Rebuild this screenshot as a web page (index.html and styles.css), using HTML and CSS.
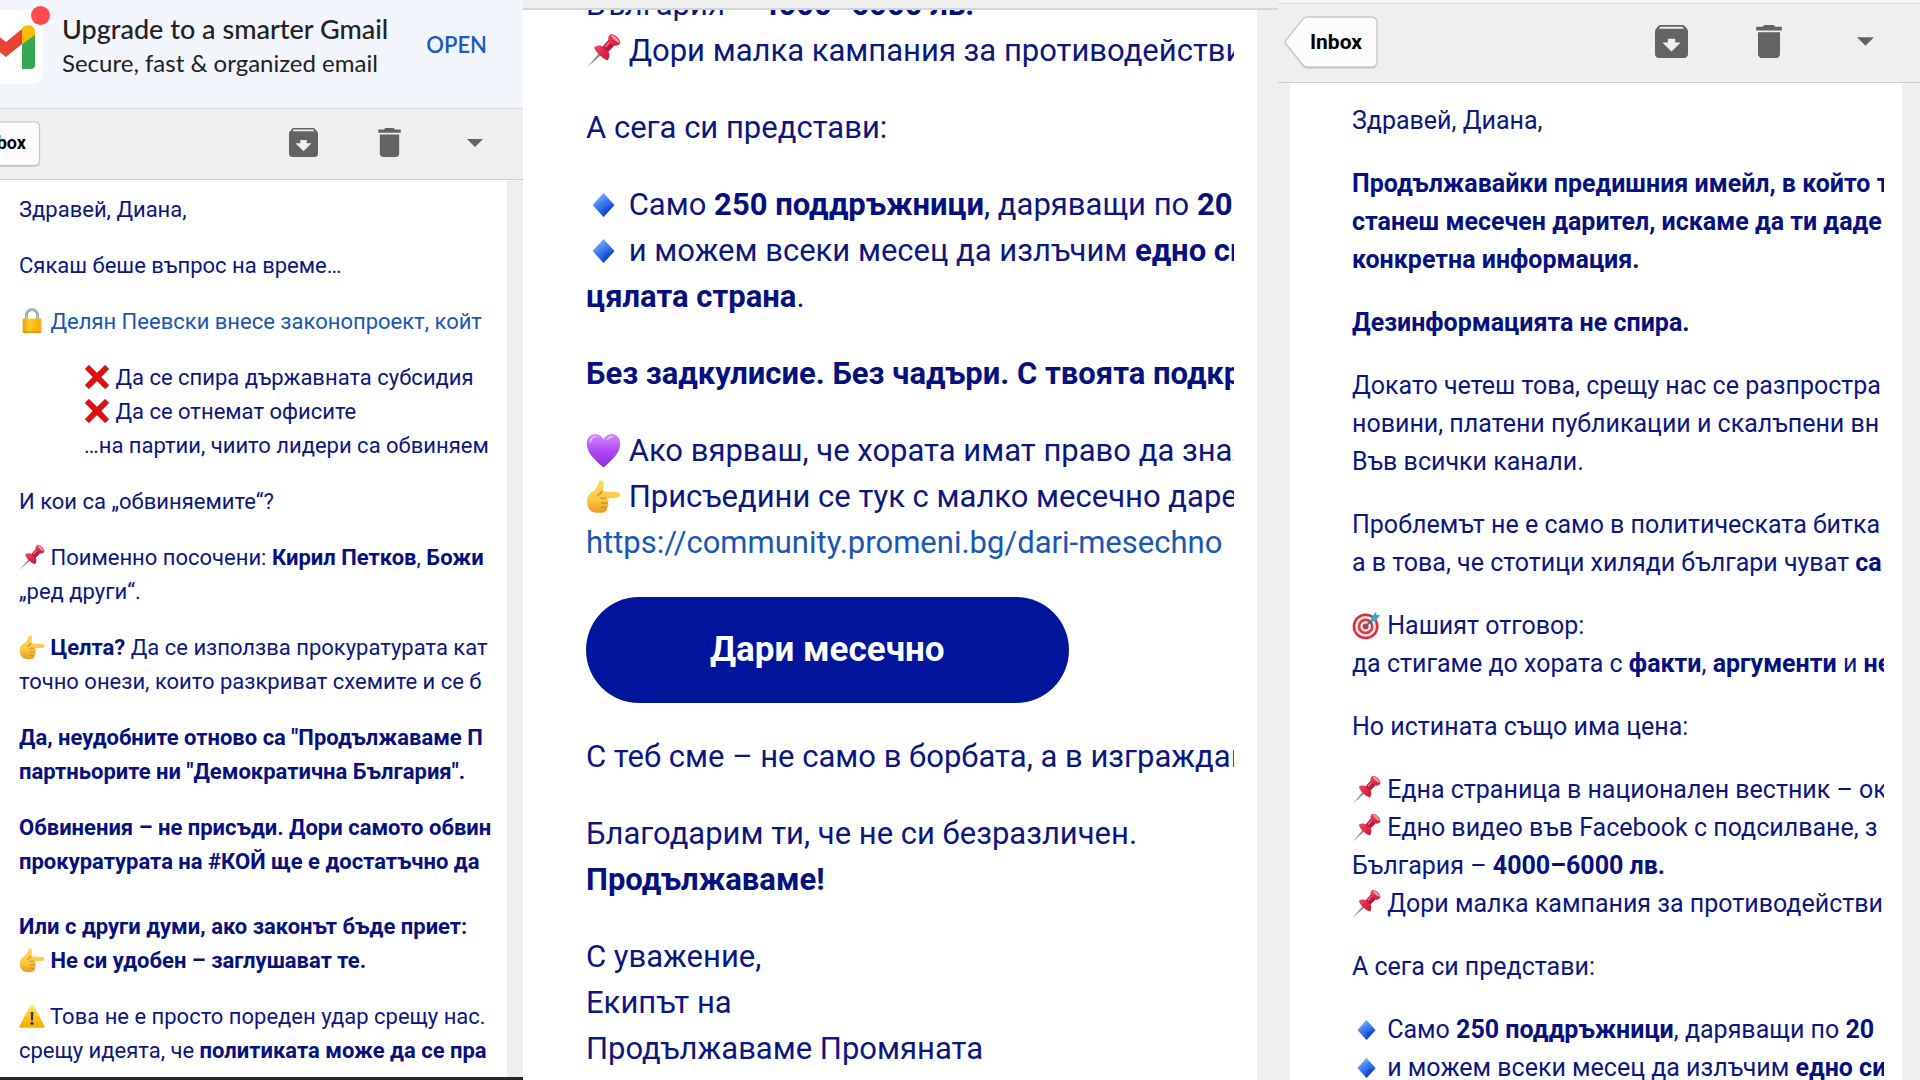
FILE: index.html
```html
<!doctype html>
<html lang="bg">
<head>
    <meta charset="UTF-8">
    <meta name="viewport" content="width=device-width, initial-scale=1.0">
    <title>Inbox</title>
    <link rel="stylesheet" href="styles.css">
</head>
<body>
<svg class="defs" aria-hidden="true">
    <defs>
        <linearGradient id="g-lock" x1="0" y1="0" x2="1" y2="0"><stop offset="0" stop-color="#f09a12"/><stop offset=".35" stop-color="#ffcf1f"/><stop offset="1" stop-color="#f5a811"/></linearGradient>
        <linearGradient id="g-pin" x1="0" y1="0" x2="1" y2="1"><stop offset="0" stop-color="#ff6f86"/><stop offset=".5" stop-color="#e0284a"/><stop offset="1" stop-color="#a80f34"/></linearGradient>
        <linearGradient id="g-hand" x1="0" y1="0" x2="0" y2="1"><stop offset="0" stop-color="#ffd95c"/><stop offset=".6" stop-color="#fbc740"/><stop offset="1" stop-color="#e99a25"/></linearGradient>
        <linearGradient id="g-warn" x1="0" y1="0" x2="0" y2="1"><stop offset="0" stop-color="#fff0a0"/><stop offset=".4" stop-color="#ffcf2a"/><stop offset="1" stop-color="#f5ac00"/></linearGradient>
        <linearGradient id="g-diamond" x1="0" y1="0" x2=".6" y2="1"><stop offset="0" stop-color="#a3cbfb"/><stop offset=".5" stop-color="#3f7ff0"/><stop offset="1" stop-color="#0a3fd0"/></linearGradient>
        <linearGradient id="g-heart" x1="0" y1="0" x2="0" y2="1"><stop offset="0" stop-color="#d68bfb"/><stop offset=".5" stop-color="#b04af4"/><stop offset="1" stop-color="#8a2be2"/></linearGradient>
        <symbol id="lock" viewBox="0 0 32 32">
            <path d="M9 15V9.500a7 7.500 0 0 1 14 0V15" fill="none" stroke="#8f9499" stroke-width="3.400"/>
            <path d="M9 15V9.500a7 7.500 0 0 1 14 0V15" fill="none" stroke="#c9cdd1" stroke-width="1.200"/>
            <rect x="4.500" y="13" width="23" height="18" rx="1.800" fill="url(#g-lock)"/>
            <path d="M5 29.500h22" stroke="#d98508" stroke-width="1.500"/>
        </symbol>
        <symbol id="cross" viewBox="0 0 32 32">
            <path d="M6 1.500l10 9.800L26 1.500 30.500 6 20.800 16l9.700 10-4.500 4.500-10-9.800-10 9.800L1.500 26l9.700-10L1.500 6z" fill="#dd1013" stroke="#b80a0d" stroke-width=".8"/>
        </symbol>
        <symbol id="pin" viewBox="0 0 32 32">
            <path d="M.8 31.600 13 17.200l2 2z" fill="#8c8f96"/>
            <path d="M7.500 13.200c2.500-2.200 6-2 8-.8l5-6c-.8-2 .5-4.800 2.500-5.600 4 .5 7.800 4 8.400 8.200-1 2.300-3.600 3.200-5.700 2.500l-5.200 5.300c1.500 2.200 1.200 5.700-.8 8.100C14.500 23 9.500 18.500 7.500 13.200z" fill="url(#g-pin)"/>
            <path d="M20.500 6.400c1 2.200 2.800 4.200 5.200 5.100l-5.200 5.300c-2-.6-4-2.300-5-4.400z" fill="#b9173b"/>
            <path d="M23 1.500c3.500.8 6.800 4 7.700 7.300-3-.2-7.300-3.800-7.700-7.300z" fill="#ff93a3"/>
            <path d="M17 12l4-4.500 1.200 1.400-4 4.500z" fill="#f5647c"/>
        </symbol>
        <symbol id="hand" viewBox="0 0 32 32">
            <path d="M1 20c0-4 2-6.500 5.500-8.500C9 10 10.500 6.500 11.600 3c.5-1.800 3-2.200 4-.5 1.200 2.200.8 5.800-.8 8.800L29 12.200c3 .2 3 4.600 0 4.800l-10.500.5c2.800.6 2.800 3.600 1 4.400 1.500 1.200 1.300 3.400-.6 4.200 1 1.600.2 3.400-1.700 4-3.200 1.100-9.200 1.300-12.200-.6C2 27.600 1 24 1 20z" fill="url(#g-hand)"/>
            <path d="M14.800 11.300c-1 2-2.600 3-4.300 3.700M18.500 17.500h-5M19.500 21.900h-5.300M18.900 26.100h-4.700" fill="none" stroke="#d88b22" stroke-width="1.300" stroke-linecap="round"/>
        </symbol>
        <symbol id="warn" viewBox="0 0 32 32">
            <path d="M14.300 2.200c.7-1.400 2.700-1.400 3.400 0L31.300 28c.7 1.300 0 2.400-1.500 2.400H2.200C.7 30.400 0 29.300.7 28z" fill="url(#g-warn)"/>
            <path d="M14.300 11h3.400l-.6 10.500h-2.200z" fill="#333"/>
            <circle cx="16" cy="25" r="1.900" fill="#333"/>
        </symbol>
        <symbol id="diamond" viewBox="0 0 32 32">
            <path d="M16 5.500 26 16.500 16 27.500 6 16.500z" fill="url(#g-diamond)"/>
            <path d="M16 27.500 26 16.500 16 19z" fill="#1243cf" opacity=".6"/>
        </symbol>
        <symbol id="heart" viewBox="0 0 32 32">
            <path d="M16 31.500C9 25.500.7 18.500.7 9.800.7 4.500 4 1 8.500 1c3.300 0 6 1.900 7.500 5 1.500-3.100 4.200-5 7.500-5 4.500 0 7.800 3.500 7.800 8.800 0 8.700-8.300 15.700-15.300 21.700z" fill="url(#g-heart)"/>
            <path d="M4 8c.3-2.500 2-4.200 4.500-4.400M19.500 6c1-1.500 2.500-2.400 4.200-2.400" fill="none" stroke="#e9b9ff" stroke-width="1.600" stroke-linecap="round"/>
        </symbol>
        <symbol id="target" viewBox="0 0 32 32">
            <circle cx="15" cy="17" r="14.300" fill="#d92f3c"/>
            <circle cx="15" cy="17" r="11.500" fill="#fbe9ea"/>
            <circle cx="15" cy="17" r="8.700" fill="#dd3a46"/>
            <circle cx="15" cy="17" r="5.800" fill="#fbe9ea"/>
            <circle cx="15" cy="17" r="3.200" fill="#d92f3c"/>
            <path d="M14.500 17.500 25 7" stroke="#3c6f85" stroke-width="2"/>
            <path d="M21.500 7.300 26.500.8l.6 3.600 4.200.4-5.600 6.200-4 .5z" fill="#35a7cf"/>
        </symbol>
        <symbol id="archive" viewBox="3 3 18 18">
            <path d="M20.540 5.230l-1.390-1.680C18.880 3.210 18.470 3 18 3H6c-.47 0-.88.210-1.160.550L3.460 5.230C3.170 5.570 3 6.020 3 6.500V19c0 1.100.9 2 2 2h14c1.100 0 2-.9 2-2V6.500c0-.48-.17-.93-.46-1.270zM12 17.500L7 12.500H10v-2h4v2h3L12 17.500zM5.120 5l.81-1h12l.94 1H5.120z" fill="#636363"/>
        </symbol>
        <symbol id="trash" viewBox="5 3 14 18">
            <path d="M6 19c0 1.100.9 2 2 2h8c1.100 0 2-.9 2-2V7H6v12zM19 4h-3.500l-1-1h-5l-1 1H5v2h14V4z" fill="#636363"/>
        </symbol>
        <symbol id="caret" viewBox="0 0 16 8">
            <path d="M0 0h16L8 8z" fill="#636363"/>
        </symbol>
        <symbol id="tag" viewBox="0 0 94 54">
            <path d="M23 2.500h64q6 0 6 6v38q0 6-6 6H23q-2.500 0-4-2L2 29q-1.500-2 0-4L19 4.500q1.500-2 4-2z" fill="#bdbdbd"/>
            <path d="M23 1h64q6 0 6 6v38q0 6-6 6H23q-2.500 0-4-2L2 28q-1.500-2 0-4L19 3q1.500-2 4-2z" fill="#fcfcfc" stroke="#c9c9c9" stroke-width="1.500"/>
        </symbol>
    </defs>
</svg>

<div class="screens">
    <section class="screen first">
        <header class="promo">
            <div class="app-icon">
                <svg class="gmail" viewBox="0 0 58 45" aria-hidden="true">
                    <path d="M0 10v31q0 4 4 4h9V20z" fill="#4285f4"/>
                    <path d="M45 20v25h9q4 0 4-4V10z" fill="#34a853"/>
                    <path d="M13 5v15l16 13 16-13V5L29 18z" fill="#ea4335"/>
                    <path d="M0 8v3l13 9V4C8-1 0 1 0 8z" fill="#c5221f"/>
                    <path d="M58 8v3L45 20V4c5-5 13-3 13 4z" fill="#fbbc04"/>
                </svg>
                <span class="badge"></span>
            </div>
            <div class="promo-text">
                <h1>Upgrade to a smarter Gmail</h1>
                <p>Secure, fast &amp; organized email</p>
            </div>
            <a class="open" href="#">OPEN</a>
        </header>
        <nav class="toolbar">
            <button class="back" type="button"><svg><use href="#tag"/></svg><span>Inbox</span></button>
            <button class="tool" type="button" aria-label="Archive"><svg class="i-archive"><use href="#archive"/></svg></button>
            <button class="tool" type="button" aria-label="Delete"><svg class="i-trash"><use href="#trash"/></svg></button>
            <button class="tool" type="button" aria-label="More"><svg class="i-caret"><use href="#caret"/></svg></button>
        </nav>
        <div class="sheet">
            <article class="mail">
                <p>Здравей, Диана,</p>
                <p>Сякаш беше въпрос на време…</p>
                <p><svg class="emoji"><use href="#lock"/></svg> <a href="#">Делян Пеевски внесе законопроект, койт</a></p>
                <p class="indent"><svg class="emoji"><use href="#cross"/></svg> Да се спира държавната субсидия<br>
                    <svg class="emoji"><use href="#cross"/></svg> Да се отнемат офисите<br>
                    …на партии, чиито лидери са обвиняем</p>
                <p>И кои са „обвиняемите“?</p>
                <p><svg class="emoji"><use href="#pin"/></svg> Поименно посочени: <b>Кирил Петков</b>, <b>Божи</b><br>
                    „ред други“.</p>
                <p><svg class="emoji"><use href="#hand"/></svg> <b>Целта?</b> Да се използва прокуратурата кат<br>
                    точно онези, които разкриват схемите и се б</p>
                <p><b>Да, неудобните отново са "Продължаваме П<br>
                    партньорите ни "Демократична България".</b></p>
                <p><b>Обвинения – не присъди. Дори самото обвин<br>
                    прокуратурата на #КОЙ ще е достатъчно да</b></p>
                <p class="after-break"><b>Или с други думи, ако законът бъде приет:<br>
                    <svg class="emoji"><use href="#hand"/></svg> Не си удобен – заглушават те.</b></p>
                <p><svg class="emoji"><use href="#warn"/></svg> Това не е просто пореден удар срещу нас.<br>
                    срещу идеята, че <b>политиката може да се пра</b></p>
            </article>
        </div>
    </section>

    <section class="screen second">
        <div class="bar-edge"></div>
        <div class="sheet">
            <article class="mail">
                <p>България – <b>4000–6000 лв.</b><br>
                    <svg class="emoji"><use href="#pin"/></svg> Дори малка кампания за противодействи</p>
                <p>А сега си представи:</p>
                <p><svg class="emoji"><use href="#diamond"/></svg> Само <b>250 поддръжници</b>, даряващи по <b>20</b><br>
                    <svg class="emoji"><use href="#diamond"/></svg> и можем всеки месец да излъчим <b>едно си</b><br>
                    <b>цялата страна</b>.</p>
                <p><b>Без задкулисие. Без чадъри. С твоята подкр</b></p>
                <p><svg class="emoji"><use href="#heart"/></svg> Ако вярваш, че хората имат право да зная<br>
                    <svg class="emoji"><use href="#hand"/></svg> Присъедини се тук с малко месечно даре<br>
                    <a href="#">https://community.promeni.bg/dari-mesechno</a></p>
                <a class="donate" href="#">Дари месечно</a>
                <p>С теб сме – не само в борбата, а в изграждан</p>
                <p>Благодарим ти, че не си безразличен.<br>
                    <b>Продължаваме!</b></p>
                <p>С уважение,<br>
                    Екипът на<br>
                    Продължаваме Промяната</p>
            </article>
        </div>
    </section>

    <section class="screen third">
        <div class="promo-edge"></div>
        <nav class="toolbar">
            <button class="back" type="button"><svg><use href="#tag"/></svg><span>Inbox</span></button>
            <button class="tool" type="button" aria-label="Archive"><svg class="i-archive"><use href="#archive"/></svg></button>
            <button class="tool" type="button" aria-label="Delete"><svg class="i-trash"><use href="#trash"/></svg></button>
            <button class="tool" type="button" aria-label="More"><svg class="i-caret"><use href="#caret"/></svg></button>
        </nav>
        <div class="sheet">
            <article class="mail">
                <p>Здравей, Диана,</p>
                <p><b>Продължавайки предишния имейл, в който т<br>
                    станеш месечен дарител, искаме да ти даде<br>
                    конкретна информация.</b></p>
                <p><b>Дезинформацията не спира.</b></p>
                <p>Докато четеш това, срещу нас се разпростра<br>
                    новини, платени публикации и скалъпени вн<br>
                    Във всички канали.</p>
                <p>Проблемът не е само в политическата битка<br>
                    а в това, че стотици хиляди българи чуват <b>са</b></p>
                <p><svg class="emoji"><use href="#target"/></svg> Нашият отговор:<br>
                    да стигаме до хората с <b>факти</b>, <b>аргументи</b> и <b>не</b></p>
                <p>Но истината също има цена:</p>
                <p><svg class="emoji"><use href="#pin"/></svg> Една страница в национален вестник – ок<br>
                    <svg class="emoji"><use href="#pin"/></svg> Едно видео във Facebook с подсилване, з<br>
                    България – <b>4000–6000 лв.</b><br>
                    <svg class="emoji"><use href="#pin"/></svg> Дори малка кампания за противодействи</p>
                <p>А сега си представи:</p>
                <p><svg class="emoji"><use href="#diamond"/></svg> Само <b>250 поддръжници</b>, даряващи по <b>20</b><br>
                    <svg class="emoji"><use href="#diamond"/></svg> и можем всеки месец да излъчим <b>едно си</b></p>
            </article>
        </div>
    </section>
</div>
</body>
</html>
```
FILE: styles.css
```css
*{margin: 0; padding: 0; box-sizing: border-box;}
body{ font-family: Roboto, "Noto Sans", sans-serif; background: #efefef; color: #0c1680;}
a{ color: #1a56b4; text-decoration: none;}
button{ border: 0; background: none; font: inherit; cursor: pointer;}
.defs{ position: absolute; width: 0; height: 0;}

.screens{ display: grid; grid-template-columns: 523fr 755fr 642fr; height: 100vh; overflow: hidden;}
.screen{ display: flex; flex-direction: column; min-width: 0; min-height: 0; overflow: hidden; background: #efefef;}
.sheet{ flex: 1; min-height: 0; overflow: hidden; background: #fff;}
.mail{ display: flex; flex-direction: column; overflow: hidden; white-space: nowrap;}
.mail b{ color: #06107e;}

/* promo strip */
.promo{ display: flex; align-items: flex-start; height: 109px; background: #f3f5fc; border-bottom: 1px solid #d9dade; color: #202124;}
.app-icon{ position: relative; flex: none; width: 74px; height: 74px; margin: 10px 19px 0 -31px; padding: 14px 0 0 8px; border-radius: 10px; background: #fff;}
.gmail{ display: block; width: 58px; height: 45px;}
.badge{ position: absolute; top: -4px; right: -7px; width: 19px; height: 19px; border-radius: 50%; background: #fc4a4f;}
.promo-text{ flex: 1; padding-top: 12px; white-space: nowrap; font-family: Lato, sans-serif;}
.promo-text h1{ font-size: 27px; line-height: 34px; font-weight: 500;}
.promo-text p{ font-size: 24px; line-height: 34px;}
.open{ margin: 29px 36px 0 0; font-family: Lato, sans-serif; font-size: 22px; line-height: 32px; font-weight: 600; color: #1b59c5;}

/* toolbar */
.toolbar{ display: flex; align-items: center; border-bottom: 1px solid #cdcdcd;}
.back{ position: relative; margin-right: auto; padding-bottom: 3px; font-weight: 700; color: #000; text-align: right;}
.back svg{ position: absolute; left: 0; top: 0; width: 100%; height: 100%;}
.back span{ position: relative;}
.tool{ display: flex; align-items: center; justify-content: center; height: 100%; padding-bottom: 3px;}

.emoji{ display: inline-block; overflow: visible;}

.first{ border-bottom: 3px solid #262626;}
.first .toolbar{ height: 71px; padding-right: 5px;}
.first .back{ width: 83px; height: 47px; margin-left: -42px; padding-right: 15px; font-size: 18px;}
.first .tool{ width: 86px;}
.first .i-archive{ width: 29px; height: 29px;}
.first .i-trash{ width: 23px; height: 29px;}
.first .i-caret{ width: 16px; height: 8px;}
.first .sheet{ margin-right: 16px; padding: 13px 16px 0 19px;}
.first .mail{ gap: 22px; font-size: 22px; line-height: 34px;}
.first .emoji{ width: 26px; height: 26px; vertical-align: -5px;}
.indent{ padding-left: 65px;}
.after-break{ padding-top: 9px;}

.second .bar-edge{ flex: none; height: 10px; border-bottom: 2px solid #d4d4d4;}
.second .sheet{ margin-right: 21px; padding: 0 23px 0 63px;}
/* scrolled position of the message */
.second .mail{ gap: 31px; margin-top: -28px; font-size: 31px; line-height: 46px;}
.second .emoji{ width: 35px; height: 35px; vertical-align: -7px;}
.donate{ align-self: flex-start; padding: 0 124px; border-radius: 53px; background: #00159b; color: #fff; font-size: 35px; line-height: 106px; font-weight: 700;}

.third .promo-edge{ height: 4px; background: #f3f5fc; border-bottom: 1px solid #d9dae2;}
.third .toolbar{ height: 79px; padding: 0 6px;}
.third .back{ width: 94px; height: 54px; padding-right: 16px; font-size: 21px;}
.third .tool{ width: 97px;}
.third .i-archive{ width: 33px; height: 33px;}
.third .i-trash{ width: 26px; height: 33px;}
.third .i-caret{ width: 17px; height: 9px;}
.third .sheet{ margin: 0 18px 0 12px; padding: 19px 18px 0 62px;}
.third .mail{ gap: 25px; font-size: 25px; line-height: 38px;}
.third .emoji{ width: 29px; height: 29px; vertical-align: -6px;}
```
